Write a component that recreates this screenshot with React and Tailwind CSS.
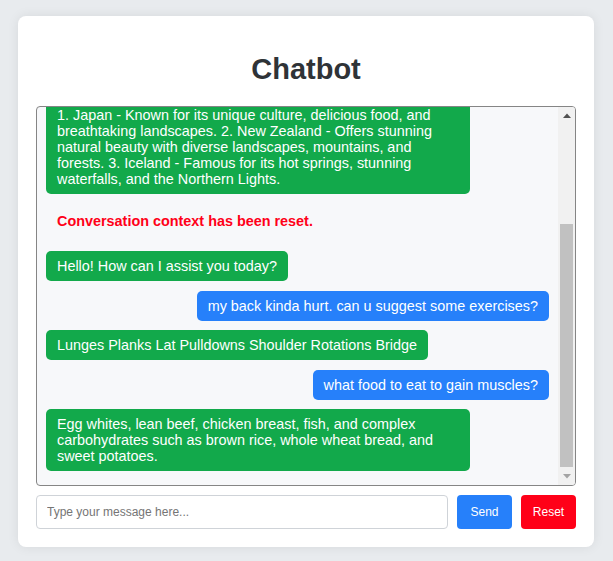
import React, { useLayoutEffect, useRef } from "react";

const messages = [
  { type: "bot", text: "Hello! How can I assist you today?" },
  { type: "user", text: "hi" },
  { type: "bot", text: "Hi there! What would you like to know?" },
  { type: "user", text: "suggest me top 3 countries to travel" },
  {
    type: "bot",
    text:
      "1. Japan - Known for its unique culture, delicious food, and breathtaking landscapes. 2. New Zealand - Offers stunning natural beauty with diverse landscapes, mountains, and forests. 3. Iceland - Famous for its hot springs, stunning waterfalls, and the Northern Lights.",
  },
  { type: "system", text: "Conversation context has been reset." },
  { type: "bot", text: "Hello! How can I assist you today?" },
  { type: "user", text: "my back kinda hurt. can u suggest some exercises?" },
  { type: "bot", text: "Lunges Planks Lat Pulldowns Shoulder Rotations Bridge" },
  { type: "user", text: "what food to eat to gain muscles?" },
  {
    type: "bot",
    text:
      "Egg whites, lean beef, chicken breast, fish, and complex carbohydrates such as brown rice, whole wheat bread, and sweet potatoes.",
  },
];

export default function App() {
  const ref = useRef(null);
  useLayoutEffect(() => {
    if (ref.current) ref.current.scrollTop = ref.current.scrollHeight;
  }, []);

  return (
    <div
      className="min-h-[561px] w-full bg-[#e8ebee] pt-4"
      style={{ fontFamily: '"Liberation Sans", Arial, sans-serif' }}
    >
      <div className="ml-[18px] w-[576px] rounded-[8px] bg-white px-[18px] pt-[18px] pb-[18px] shadow-[0_0_12px_rgba(0,0,0,0.08)]">
        <h1 className="mt-[19px] mb-[21px] text-center text-[29px] font-bold leading-[32px] text-[#2f3337]">
          Chatbot
        </h1>
        <div className="flex h-[380px] overflow-hidden rounded-[4px] border border-[#858585] bg-[#f7f8fa]">
          <div
            ref={ref}
            className="flex-1 overflow-y-scroll px-[9px] pt-[10px] pb-[14px] [scrollbar-width:none] [&::-webkit-scrollbar]:hidden"
          >
            <div className="flex flex-col gap-[9.5px]">
              {messages.map((m, i) => {
                if (m.type === "system") {
                  return (
                    <div
                      key={i}
                      className="px-[11px] pt-[9.5px] pb-[12.5px] text-[14.4px] font-bold leading-[16px] text-[#ff0018]"
                    >
                      {m.text}
                    </div>
                  );
                }
                const isUser = m.type === "user";
                return (
                  <div
                    key={i}
                    className={
                      isUser
                        ? "max-w-[424px] self-end rounded-[5px] bg-[#2680fa] px-[11px] py-[7px] text-[14.4px] leading-[16px] text-white"
                        : "max-w-[424px] self-start rounded-[5px] bg-[#12a94b] px-[11px] py-[7px] text-[14.4px] leading-[16px] text-white"
                    }
                  >
                    {m.text}
                  </div>
                );
              })}
            </div>
          </div>
          <div className="flex w-[17px] shrink-0 flex-col bg-[#f1f1f1]">
            <div className="flex h-[17px] items-center justify-center">
              <svg width="8" height="5" viewBox="0 0 8 5">
                <path d="M0 5 L4 0.5 L8 5 Z" fill="#505050" />
              </svg>
            </div>
            <div className="h-[100px]" />
            <div className="mx-[2px] h-[243px] bg-[#c1c1c1]" />
            <div className="flex-1" />
            <div className="flex h-[17px] items-center justify-center">
              <svg width="8" height="5" viewBox="0 0 8 5">
                <path d="M0 0 L4 4.5 L8 0 Z" fill="#a3a3a3" />
              </svg>
            </div>
          </div>
        </div>
        <div className="mt-[9px] flex items-center gap-[9px]">
          <input
            type="text"
            placeholder="Type your message here..."
            className="h-[34px] min-w-0 flex-1 rounded-[4px] border border-[#cfd3d8] bg-white px-[10px] text-[12px] text-[#333] placeholder:text-[#757575] outline-none"
          />
          <button className="h-[34px] w-[55px] rounded-[4px] bg-[#2680fa] text-[12px] text-white">
            Send
          </button>
          <button className="h-[34px] w-[55px] rounded-[4px] bg-[#ff0018] text-[12px] text-white">
            Reset
          </button>
        </div>
      </div>
    </div>
  );
}
